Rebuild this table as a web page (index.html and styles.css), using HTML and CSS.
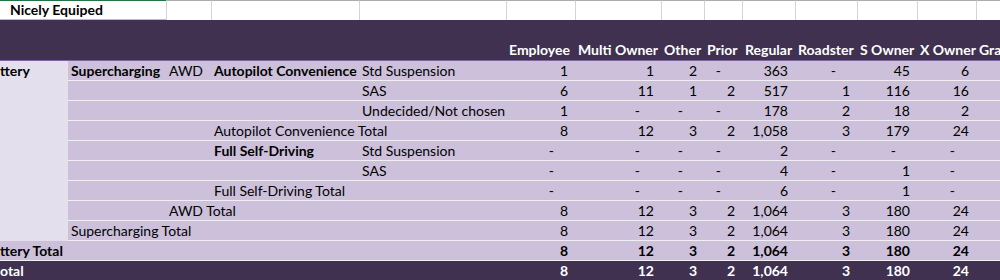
FILE: index.html
```html
<!DOCTYPE html>
<html lang="en">
<head>
<meta charset="utf-8">
<title>Nicely Equiped</title>
<link rel="stylesheet" href="styles.css">
</head>
<body>
<div class="sheet">
  <div class="r0">
    <div class="a1">Nicely Equiped</div>
    <div></div><div></div><div></div><div></div><div></div><div></div><div></div><div></div><div></div><div></div><div></div><div></div>
  </div>

  <div class="band">
    <div class="spacer"></div>
    <div class="h">Employee</div>
    <div class="h">Multi Owner</div>
    <div class="h">Other</div>
    <div class="h">Prior</div>
    <div class="h">Regular</div>
    <div class="h">Roadster</div>
    <div class="h">S Owner</div>
    <div class="h">X Owner</div>
    <div class="h last">Gra</div>
  </div>

  <div class="pivot">
    <div class="row">
      <div class="side b">ttery</div>
      <div class="b">Supercharging</div><div>AWD</div><div class="b">Autopilot Convenience</div><div>Std Suspension</div>
      <div class="num">1</div><div class="num">1</div><div class="num">2</div><div class="dash">-</div><div class="num">363</div><div class="dash">-</div><div class="num">45</div><div class="num">6</div><div></div>
    </div>
    <div class="row">
      <div></div><div></div><div></div><div>SAS</div>
      <div class="num">6</div><div class="num">11</div><div class="num">1</div><div class="num">2</div><div class="num">517</div><div class="num">1</div><div class="num">116</div><div class="num">16</div><div></div>
    </div>
    <div class="row">
      <div></div><div></div><div></div><div>Undecided/Not chosen</div>
      <div class="num">1</div><div class="dash">-</div><div class="dash">-</div><div class="dash">-</div><div class="num">178</div><div class="num">2</div><div class="num">18</div><div class="num">2</div><div></div>
    </div>
    <div class="row">
      <div></div><div></div><div>Autopilot Convenience Total</div><div></div>
      <div class="num">8</div><div class="num">12</div><div class="num">3</div><div class="num">2</div><div class="num">1,058</div><div class="num">3</div><div class="num">179</div><div class="num">24</div><div></div>
    </div>
    <div class="row">
      <div></div><div></div><div class="b">Full Self-Driving</div><div>Std Suspension</div>
      <div class="dash">-</div><div class="dash">-</div><div class="dash">-</div><div class="dash">-</div><div class="num">2</div><div class="dash">-</div><div class="dash">-</div><div class="dash">-</div><div></div>
    </div>
    <div class="row">
      <div></div><div></div><div></div><div>SAS</div>
      <div class="dash">-</div><div class="dash">-</div><div class="dash">-</div><div class="dash">-</div><div class="num">4</div><div class="dash">-</div><div class="num">1</div><div class="dash">-</div><div></div>
    </div>
    <div class="row">
      <div></div><div></div><div>Full Self-Driving Total</div><div></div>
      <div class="dash">-</div><div class="dash">-</div><div class="dash">-</div><div class="dash">-</div><div class="num">6</div><div class="dash">-</div><div class="num">1</div><div class="dash">-</div><div></div>
    </div>
    <div class="row">
      <div></div><div>AWD Total</div><div></div><div></div>
      <div class="num">8</div><div class="num">12</div><div class="num">3</div><div class="num">2</div><div class="num">1,064</div><div class="num">3</div><div class="num">180</div><div class="num">24</div><div></div>
    </div>
    <div class="row">
      <div>Supercharging Total</div><div></div><div></div><div></div>
      <div class="num">8</div><div class="num">12</div><div class="num">3</div><div class="num">2</div><div class="num">1,064</div><div class="num">3</div><div class="num">180</div><div class="num">24</div><div></div>
    </div>
    <div class="row total">
      <div class="first">ttery Total</div><div></div><div></div><div></div><div></div>
      <div class="num">8</div><div class="num">12</div><div class="num">3</div><div class="num">2</div><div class="num">1,064</div><div class="num">3</div><div class="num">180</div><div class="num">24</div><div></div>
    </div>
    <div class="row grand">
      <div class="first">otal</div><div></div><div></div><div></div><div></div>
      <div class="num">8</div><div class="num">12</div><div class="num">3</div><div class="num">2</div><div class="num">1,064</div><div class="num">3</div><div class="num">180</div><div class="num">24</div><div></div>
    </div>
  </div>
</div>
</body>
</html>
```
FILE: styles.css
```css
:root {
  --cols: 68px 98px 45px 148px 147px 69px 86px 43px 38px 53px 62px 60px 59px 24px;
  --dark: #403151;
  --mid: #8064a2;
  --light: #ccc0da;
  --pale: #e4dfec;
}

html, body {
  margin: 0;
  padding: 0;
}

body {
  width: 1000px;
  height: 280px;
  overflow: hidden;
  background: #ffffff;
  color: #000000;
  font-family: Lato, "Liberation Sans", sans-serif;
  font-size: 14px;
}

.sheet {
  width: 1000px;
}

/* plain worksheet row */
.r0 {
  display: grid;
  grid-template-columns: 166px 45px 148px 147px 69px 86px 43px 38px 53px 62px 60px 59px 24px;
  height: 20px;
}

.r0 > div {
  box-sizing: border-box;
  height: 20px;
  border-top: 1px solid #ababab;
  border-left: 1px solid #d4d4d4;
}

.r0 > .a1 {
  border-left: none;
  border-top-color: #217346;
  border-bottom: 1px solid #bdbdbd;
  padding-left: 10px;
  font-weight: 700;
  line-height: 18px;
  white-space: nowrap;
}

/* pivot header band */
.band {
  display: grid;
  grid-template-columns: var(--cols);
  height: 20px;
  padding-top: 20px;
  background: var(--dark);
  border-bottom: 1px solid var(--mid);
  color: #ffffff;
  font-weight: 700;
}

.band .spacer {
  grid-column: span 5;
}

.band .h {
  line-height: 20px;
  padding-left: 3px;
  white-space: nowrap;
}

.band .last {
  overflow: hidden;
}

/* pivot body */
.pivot {
  display: grid;
  grid-template-columns: var(--cols);
  grid-auto-rows: 20px;
  background: var(--light);
}

.row {
  display: contents;
}

.row > div {
  box-sizing: border-box;
  border-bottom: 1px solid #f1eef5;
  line-height: 19px;
  padding-left: 3px;
  white-space: nowrap;
}

.row > .side {
  grid-row: span 9;
  background: var(--pale);
  border-bottom: none;
  padding-left: 0;
}

.row > .first {
  padding-left: 0;
}

.row > .num {
  text-align: right;
  padding: 0 7px 0 0;
}

.row > .dash {
  text-align: right;
  padding: 0 21px 0 0;
}

.b {
  font-weight: 700;
}

.total > div {
  font-weight: 700;
}

.grand > div {
  background: var(--dark);
  color: #ffffff;
  font-weight: 700;
  border-bottom: none;
}
```
